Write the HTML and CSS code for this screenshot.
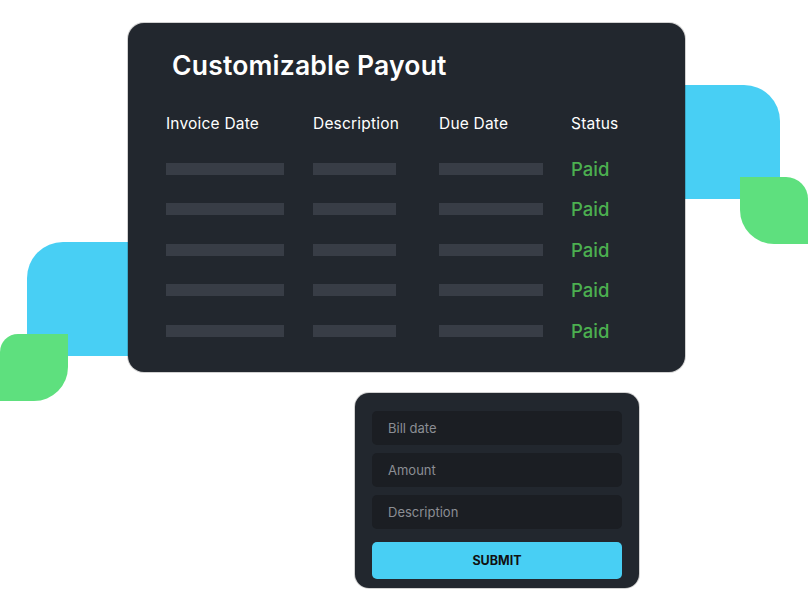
FILE: index.html
```html
<!DOCTYPE html>
<html lang="en">
<head>
  <meta charset="UTF-8">
  <meta name="viewport" content="width=device-width, initial-scale=1.0">
  <title>Customizable Payout</title>
  <link rel="stylesheet" href="styles.css">
</head>
<body>
  <div class="stage">
    <!-- decorative blobs behind the cards -->
    <div class="blob blob-right"></div>
    <div class="leaf leaf-right"></div>
    <div class="blob blob-left"></div>
    <div class="leaf leaf-left"></div>

    <div class="payout-card">
      <h1>Customizable Payout</h1>
      <div class="table">
        <div class="th">Invoice Date</div>
        <div class="th">Description</div>
        <div class="th">Due Date</div>
        <div class="th">Status</div>

        <div class="bar bar-invoice"></div><div class="bar bar-desc"></div><div class="bar bar-due"></div><div class="paid">Paid</div>
        <div class="bar bar-invoice"></div><div class="bar bar-desc"></div><div class="bar bar-due"></div><div class="paid">Paid</div>
        <div class="bar bar-invoice"></div><div class="bar bar-desc"></div><div class="bar bar-due"></div><div class="paid">Paid</div>
        <div class="bar bar-invoice"></div><div class="bar bar-desc"></div><div class="bar bar-due"></div><div class="paid">Paid</div>
        <div class="bar bar-invoice"></div><div class="bar bar-desc"></div><div class="bar bar-due"></div><div class="paid">Paid</div>
      </div>
    </div>

    <form class="bill-form" onsubmit="return false">
      <input type="text" placeholder="Bill date">
      <input type="text" placeholder="Amount">
      <input type="text" placeholder="Description">
      <button type="submit">SUBMIT</button>
    </form>
  </div>
</body>
</html>
```

FILE: styles.css
```css
body {
  margin: 0;
  background: #fff;
  font-family: Inter, "Open Sans", sans-serif;
}
.stage {
  position: relative;
  width: 810px;
  height: 615px;
  padding-top: 23px;
  box-sizing: border-box;
  overflow: hidden;
}
.blob, .leaf {
  position: absolute;
}
.blob {
  background: #48cff4;
}
.blob-right {
  left: 640px;
  top: 85px;
  width: 140px;
  height: 114px;
  border-radius: 0 36px 0 0;
}
.blob-left {
  left: 27px;
  top: 242px;
  width: 140px;
  height: 114px;
  border-radius: 36px 0 0 0;
}
.leaf {
  background: #5ee07e;
  width: 68px;
  height: 67px;
}
.leaf-right {
  left: 740px;
  top: 177px;
  border-radius: 0 22px 0 34px;
}
.leaf-left {
  left: 0;
  top: 334px;
  border-radius: 18px 0 34px 0;
}
.payout-card {
  position: relative; /* sit above the blobs */
  margin-left: 128px;
  width: 557px;
  height: 349px;
  box-sizing: border-box;
  padding: 26px 0 0 38px;
  background: #22272e;
  border-radius: 16px;
  box-shadow: 0 0 0 1px rgba(0, 0, 0, 0.18);
  color: #fff;
}
h1 {
  margin: 0 0 0 6px;
  font-size: 26.5px;
  font-weight: 600;
  line-height: 32px;
  letter-spacing: 0.2px;
}
.table {
  display: grid;
  grid-template-columns: 147px 126px 132px auto;
  grid-template-rows: 49.5px;
  grid-auto-rows: 40.5px;
  align-items: center;
  margin-top: 18px;
}
.th {
  font-size: 15.5px;
  line-height: 20px;
  letter-spacing: 0.2px;
}
.bar {
  height: 12px;
  background: #383d46;
}
.bar-invoice { width: 118px; }
.bar-desc { width: 83px; }
.bar-due { width: 104px; }
.paid {
  color: #4caf50;
  font-size: 18.5px;
  font-weight: 500;
  line-height: 24px;
}
.bill-form {
  position: relative;
  margin: 21px 0 0 355px;
  width: 284px;
  box-sizing: border-box;
  padding: 18px 17px 9px;
  background: #22272e;
  border-radius: 14px;
  box-shadow: 0 0 0 1px rgba(0, 0, 0, 0.18);
  display: flex;
  flex-direction: column;
  gap: 8px;
}
.bill-form input {
  height: 34px;
  border: 0;
  border-radius: 5px;
  background: #1b1e23;
  padding: 0 16px;
  font-family: inherit;
  font-size: 13px;
  color: #ccc;
  outline: none;
}
.bill-form input::placeholder {
  color: #8b8e94;
}
.bill-form button {
  margin-top: 5px;
  height: 37px;
  border: 0;
  border-radius: 5px;
  background: #48cff4;
  color: #111;
  font-family: inherit;
  font-size: 12.5px;
  font-weight: 700;
  cursor: pointer;
}
```
